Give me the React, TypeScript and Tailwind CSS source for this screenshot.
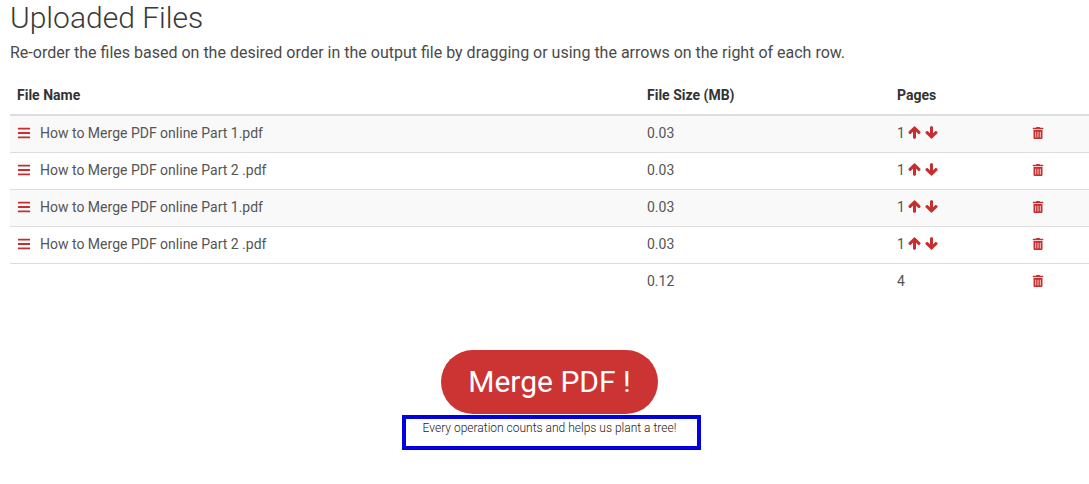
import { FaBars, FaArrowUp, FaArrowDown, FaTrashAlt } from "react-icons/fa";

const rows = [
  "How to Merge PDF online Part 1.pdf",
  "How to Merge PDF online Part 2 .pdf",
  "How to Merge PDF online Part 1.pdf",
  "How to Merge PDF online Part 2 .pdf",
];

function Trash() {
  return <FaTrashAlt className="mb-[2px] text-[12px] text-[#c62f2f]" />;
}

export default function App() {
  return (
    <div className="w-[1089px] h-[484px] overflow-hidden bg-white font-['Roboto',sans-serif] text-[#555]">
      <h1 className="pl-[10px] text-[30px] leading-[36px] font-light text-[#3a3a3a]">Uploaded Files</h1>
      <p className="pl-[10px] mt-[8px] text-[16px] leading-[18px] text-[#4a4a4a]">
        Re-order the files based on the desired order in the output file by dragging or using the arrows on the right of each row.
      </p>
      <div className="pl-[10px] mt-[10px]">
        <table className="w-[1079px] table-fixed border-collapse text-[14px]">
          <colgroup>
            <col className="w-[630px]" />
            <col className="w-[250px]" />
            <col className="w-[135px]" />
            <col />
          </colgroup>
          <thead>
            <tr className="h-[43px] border-b-2 border-[#dddddd] text-left text-[#333]">
              <th className="pl-[7px] pt-[4px] font-bold">File Name</th>
              <th className="pl-[7px] pt-[4px] font-bold">File Size (MB)</th>
              <th className="pl-[7px] pt-[4px] font-bold">Pages</th>
              <th />
            </tr>
          </thead>
          <tbody>
            {rows.map((name, i) => (
              <tr key={i} className={`h-[37px] border-b border-[#dddddd] ${i % 2 === 0 ? "bg-[#f9f9f9]" : "bg-white"}`}>
                <td className="pl-[7px]">
                  <div className="flex items-center gap-[9px]">
                    <FaBars className="mb-[2px] text-[14px] text-[#c62f2f]" />
                    <span>{name}</span>
                  </div>
                </td>
                <td className="pl-[7px]">0.03</td>
                <td className="pl-[7px]">
                  <div className="flex items-center gap-[4px]">
                    <span className="mr-[-1px]">1</span>
                    <FaArrowUp stroke="currentColor" strokeWidth={40} className="mb-[2px] text-[13px] text-[#c62f2f]" />
                    <FaArrowDown stroke="currentColor" strokeWidth={40} className="mb-[2px] text-[13px] text-[#c62f2f]" />
                  </div>
                </td>
                <td className="pl-[7px]"><Trash /></td>
              </tr>
            ))}
            <tr className="h-[37px]">
              <td />
              <td className="pl-[7px]">0.12</td>
              <td className="pl-[7px]">4</td>
              <td className="pl-[7px]"><Trash /></td>
            </tr>
          </tbody>
        </table>
      </div>
      <div className="mt-[50px] flex flex-col items-center w-[1099px]">
        <button className="w-[217px] h-[64px] pb-[2px] rounded-[32px] bg-[#cc3333] text-white text-[30px]">Merge PDF !</button>
        <div className="mt-[1px] ml-[3px] pr-[3px] w-[299px] h-[35px] border-[4px] border-[#0000e0] text-center text-[12px] leading-[18px] font-light text-[#222]">
          Every operation counts and helps us plant a tree!
        </div>
      </div>
    </div>
  );
}
